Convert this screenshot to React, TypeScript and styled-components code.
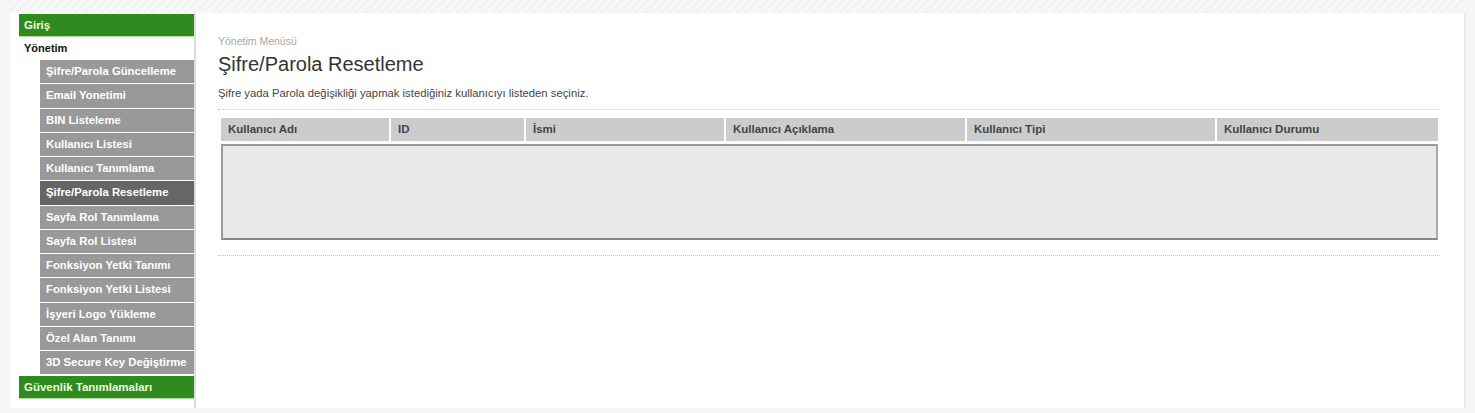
import styled, { createGlobalStyle } from "styled-components";

const GlobalStyle = createGlobalStyle`
  html, body {
    margin: 0;
    padding: 0;
    background: #f6f6f6;
    font-family: "Liberation Sans", Arial, sans-serif;
  }
`;

const menuItems = [
  "Şifre/Parola Güncelleme",
  "Email Yonetimi",
  "BIN Listeleme",
  "Kullanıcı Listesi",
  "Kullanıcı Tanımlama",
  "Şifre/Parola Resetleme",
  "Sayfa Rol Tanımlama",
  "Sayfa Rol Listesi",
  "Fonksiyon Yetki Tanımı",
  "Fonksiyon Yetki Listesi",
  "İşyeri Logo Yükleme",
  "Özel Alan Tanımı",
  "3D Secure Key Değiştirme",
];

const columns = [
  { label: "Kullanıcı Adı", width: 168 },
  { label: "ID", width: 133 },
  { label: "İsmi", width: 198 },
  { label: "Kullanıcı Açıklama", width: 239 },
  { label: "Kullanıcı Tipi", width: 248 },
  { label: "Kullanıcı Durumu", width: 0 },
];

export default function App() {
  return (
    <Page>
      <GlobalStyle />
      <Stripe />
      <Frame>
        <Sidebar>
          <GreenItem>Giriş</GreenItem>
          <Section>Yönetim</Section>
          <SubMenu>
            {menuItems.map((item) => (
              <SubItem key={item} $active={item === "Şifre/Parola Resetleme"}>
                {item}
              </SubItem>
            ))}
          </SubMenu>
          <GreenItem>Güvenlik Tanımlamaları</GreenItem>
        </Sidebar>
        <Main>
          <Breadcrumb>Yönetim Menüsü</Breadcrumb>
          <Title>Şifre/Parola Resetleme</Title>
          <Desc>Şifre yada Parola değişikliği yapmak istediğiniz kullanıcıyı listeden seçiniz.</Desc>
          <Dotted />
          <Grid>
            <HeaderRow>
              {columns.map((c) => (
                <HeaderCell key={c.label} $width={c.width}>
                  {c.label}
                </HeaderCell>
              ))}
            </HeaderRow>
            <Body />
          </Grid>
          <Dotted $gap={15} />
        </Main>
      </Frame>
    </Page>
  );
}

const Page = styled.div`
  width: 1475px;
  height: 413px;
  box-sizing: border-box;
  padding: 0 9px 5px 10px;
  display: flex;
  flex-direction: column;
`;

const Stripe = styled.div`
  height: 13px;
  flex: none;
  background: repeating-linear-gradient(
    135deg,
    #f3f3f3 0 3px,
    #f8f8f8 3px 6px
  );
`;

const Frame = styled.div`
  flex: 1;
  display: flex;
  background: #fff;
  border-right: 2px solid #ececec;
`;

const Sidebar = styled.div`
  width: 175px;
  margin-left: 9px;
  padding-top: 1px;
  border-right: 2px solid #dcdcdc;
  flex: none;
`;

const GreenItem = styled.div`
  height: 22px;
  line-height: 22px;
  background: #2f8a1f;
  border-bottom: 1px solid #aee39a;
  color: #eaffdd;
  font-size: 11.5px;
  font-weight: bold;
  padding-left: 5px;
  white-space: nowrap;
`;

const Section = styled.div`
  height: 23px;
  line-height: 23px;
  padding-left: 5px;
  font-size: 11px;
  font-weight: bold;
  color: #111;
`;

const SubMenu = styled.div`
  padding-left: 21px;
  padding-bottom: 1px;
`;

const SubItem = styled.div<{ $active?: boolean }>`
  height: 23.25px;
  line-height: 23px;
  border-bottom: 1px solid #fff;
  background: ${(p) => (p.$active ? "#666" : "#999")};
  color: #fff;
  font-size: 11.3px;
  font-weight: bold;
  padding-left: 6px;
  white-space: nowrap;
  overflow: hidden;
`;

const Main = styled.div`
  flex: 1;
  padding: 22px 24px 0 22px;
`;

const Breadcrumb = styled.div`
  font-size: 10.5px;
  color: #a8a8a8;
  height: 15px;
`;

const Title = styled.h1`
  margin: 0;
  font-size: 20px;
  font-weight: normal;
  color: #333;
  height: 37px;
  line-height: 28px;
`;

const Desc = styled.div`
  font-size: 11.3px;
  color: #444;
  height: 22px;
`;

const Dotted = styled.div<{ $gap?: number }>`
  margin-top: ${(p) => p.$gap ?? 0}px;
  border-top: 1px dotted #c8c8c8;
`;

const Grid = styled.div`
  margin: 8px 0 0 3px;
  width: 1217px;
`;

const HeaderRow = styled.div`
  display: flex;
  gap: 2px;
  height: 23px;
`;

const HeaderCell = styled.div<{ $width: number }>`
  ${(p) => (p.$width ? `width: ${p.$width}px; flex: none;` : "flex: 1;")}
  background: #ccc;
  color: #444;
  font-size: 11.5px;
  font-weight: bold;
  line-height: 23px;
  padding-left: 7px;
  box-sizing: border-box;
`;

const Body = styled.div`
  margin-top: 3px;
  height: 92px;
  background: #e9e9e9;
  border: 2px solid #999;
  border-right-color: #aaa;
  border-bottom-color: #888;
`;
